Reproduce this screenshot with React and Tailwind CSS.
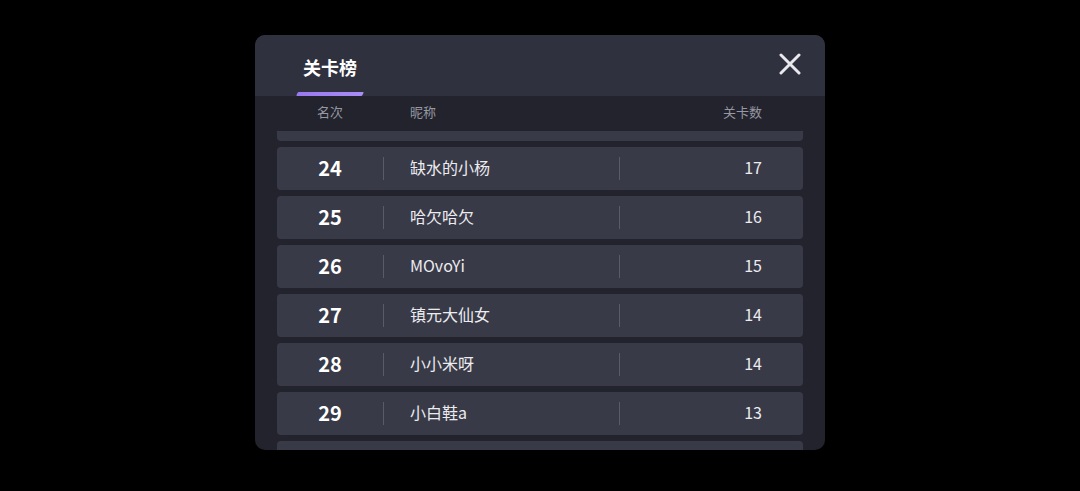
import React from 'react';

const rows = [
  { rank: 24, name: '缺水的小杨', count: 17 },
  { rank: 25, name: '哈欠哈欠', count: 16 },
  { rank: 26, name: 'MOvoYi', count: 15 },
  { rank: 27, name: '镇元大仙女', count: 14 },
  { rank: 28, name: '小小米呀', count: 14 },
  { rank: 29, name: '小白鞋a', count: 13 },
];

function CloseIcon() {
  return (
    <svg width="22" height="22" viewBox="0 0 22 22" fill="none">
      <path d="M2 2L20 20M20 2L2 20" stroke="#e8e8ee" strokeWidth="3" strokeLinecap="round" />
    </svg>
  );
}

export default function App() {
  return (
    <div
      className="w-[1080px] h-[491px] bg-black flex justify-center pt-[35px]"
      style={{ fontFamily: '"Noto Sans CJK SC", "Noto Sans", sans-serif' }}
    >
      <div className="w-[570px] h-[415px] rounded-[10px] overflow-hidden bg-[#22232c] flex flex-col">
        <div className="h-[61px] bg-[#2f313e] flex items-end justify-between pl-[41px] pr-[26px] shrink-0">
          <div className="flex flex-col items-center">
            <span className="text-[18px] font-bold text-white leading-none mb-[16px] px-[7px]">关卡榜</span>
            <div className="w-[66px] h-[4px] -skew-x-[25deg] rounded-[1px] bg-gradient-to-r from-[#9a78ef] to-[#a98cf6]" />
          </div>
          <button className="self-center mb-[3px] -mr-[2px]">
            <CloseIcon />
          </button>
        </div>

        <div className="flex h-[35px] pb-[4px] items-center leading-none text-[13px] text-[#9697a2] px-[22px] shrink-0">
          <div className="w-[106px] text-center">名次</div>
          <div className="w-[236px] pl-[27px]">昵称</div>
          <div className="flex-1 text-right pr-[41px]">关卡数</div>
        </div>

        <div className="flex-1 overflow-hidden px-[22px] flex flex-col gap-[6px]">
          <div className="h-[10px] shrink-0 rounded-b-[4px] bg-[#393a47]" />
          {rows.map(r => (
            <div key={r.rank} className="h-[43px] shrink-0 rounded-[4px] bg-[#393a47] flex items-center leading-none pb-[3px]">
              <div className="w-[106px] text-center text-[20px] font-bold text-white pt-[2px]">{r.rank}</div>
              <div className="w-px h-[23px] mt-[3px] bg-[#5a5b67]" />
              <div className="w-[235px] pl-[26px] text-[16px] text-[#ececf0]">{r.name}</div>
              <div className="w-px h-[23px] mt-[3px] bg-[#5a5b67]" />
              <div className="flex-1 text-right pr-[41px] text-[16px] text-[#ececf0]">{r.count}</div>
            </div>
          ))}
          <div className="h-[43px] shrink-0 rounded-[4px] bg-[#393a47]" />
        </div>
      </div>
    </div>
  );
}
